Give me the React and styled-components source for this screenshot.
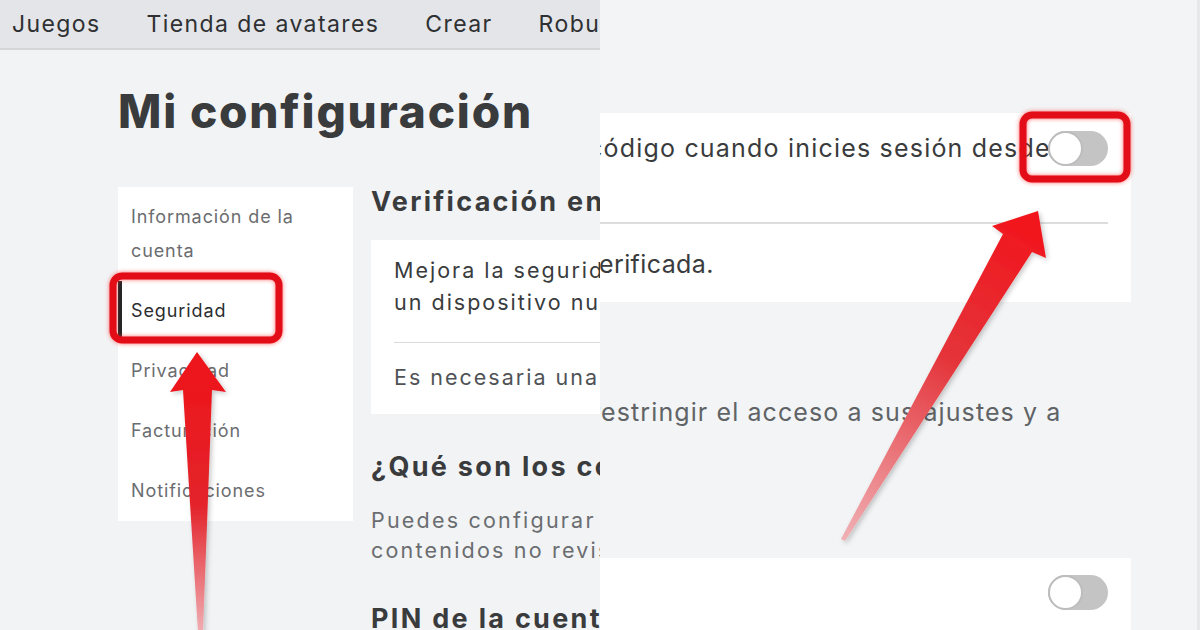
import React from "react";
import styled, { createGlobalStyle } from "styled-components";

const GlobalStyle = createGlobalStyle`
  html, body {
    margin: 0;
    padding: 0;
  }
  body {
    width: 1200px;
    height: 630px;
    overflow: hidden;
    background: #f2f4f5;
    font-family: Inter, "Liberation Sans", sans-serif;
  }
`;

const Frame = styled.div`
  position: relative;
  display: flex;
  width: 1200px;
  height: 630px;
  overflow: hidden;
`;

/* ---------- left half: the settings page ---------- */

const LeftPane = styled.div`
  width: 600px;
  height: 630px;
  flex-shrink: 0;
  overflow: hidden;
  display: flex;
  flex-direction: column;
  background: #f2f3f5;
`;

const TopNav = styled.nav`
  height: 48px;
  flex-shrink: 0;
  display: flex;
  align-items: center;
  gap: 46px;
  padding-left: 12px;
  background: #e3e5e8;
  border-bottom: 2px solid #d4d7da;
  white-space: nowrap;
`;

const NavLink = styled.span`
  font-size: 23px;
  letter-spacing: 1.4px;
  color: #2e3032;
`;

const Content = styled.div`
  padding-left: 118px;
  display: flex;
  flex-direction: column;
`;

const PageTitle = styled.h1`
  margin: 38px 0 0;
  font-size: 46px;
  line-height: 46px;
  font-weight: 800;
  letter-spacing: 1.8px;
  color: #393b3d;
  white-space: nowrap;
`;

const Columns = styled.div`
  display: flex;
  gap: 18px;
  margin-top: 53px;
`;

const SideMenu = styled.ul`
  list-style: none;
  margin: 0;
  padding: 0;
  width: 235px;
  height: 334px;
  flex-shrink: 0;
  background: #ffffff;
`;

const MenuItem = styled.li`
  padding: 13px 8px 13px 13px;
  font-size: 18px;
  line-height: 34px;
  letter-spacing: 0.9px;
  white-space: nowrap;
  color: ${(p) => (p.$active ? "#2b2d2f" : "#6b6d70")};
  box-shadow: ${(p) => (p.$active ? "inset 4px 0 0 #232527" : "none")};
`;

const MainColumn = styled.div`
  width: 900px;
  flex-shrink: 0;
  display: flex;
  flex-direction: column;
  white-space: nowrap;
`;

const SectionTitle = styled.h2`
  margin: ${(p) => p.$top || 0}px 0 0;
  font-size: 27px;
  line-height: 30px;
  font-weight: 700;
  letter-spacing: 2.3px;
  color: #393b3d;
`;

const InfoCard = styled.div`
  margin-top: 23px;
  background: #ffffff;
  padding: 14px 23px 21px;
`;

const CardText = styled.p`
  margin: 0;
  font-size: 21.5px;
  line-height: 32px;
  letter-spacing: 2px;
  color: ${(p) => (p.$muted ? "#505356" : "#393b3d")};
`;

const CardRule = styled.hr`
  border: none;
  height: 1px;
  background: #d9dadb;
  margin: 24px 0 18px;
`;

const Paragraph = styled.p`
  margin: 23px 0 0;
  font-size: 21.5px;
  line-height: 30px;
  letter-spacing: 2.2px;
  color: #6a6d70;
`;

/* ---------- right half: the zoomed-in crop ---------- */

const RightPane = styled.div`
  width: 600px;
  height: 630px;
  flex-shrink: 0;
  overflow: hidden;
  display: flex;
  flex-direction: column;
  padding-top: 113px;
  box-sizing: border-box;
  background: #f2f4f5;
  border-right: 3px solid #e6e8ea;
  white-space: nowrap;
`;

const ZoomCard = styled.div`
  margin-left: -40px;
  width: 571px;
  flex-shrink: 0;
  background: #ffffff;
  padding: ${(p) => (p.$bottom ? "16px 23px 40px 28px" : "0 23px 22px 28px")};
  box-sizing: border-box;
`;

const ZoomRow = styled.div`
  display: flex;
  align-items: center;
  height: ${(p) => p.$h || 70}px;
  overflow: hidden;
`;

const ZoomText = styled.span`
  display: block;
  flex: 1;
  min-width: 0;
  font-size: 25px;
  line-height: 32px;
  letter-spacing: ${(p) => p.$ls ?? 1.2}px;
  color: #393b3d;
  margin-left: ${(p) => p.$shift || 0}px;
`;

const ZoomRule = styled.hr`
  border: none;
  height: 2px;
  background: #dcdddf;
  margin: 39px 0 24px;
`;

const ZoomParagraph = styled.p`
  margin: 94px 0 0 -9px;
  font-size: 25px;
  line-height: 32px;
  letter-spacing: 1.1px;
  color: #606366;
`;

const ToggleTrack = styled.div`
  position: relative;
  width: 60px;
  height: 35px;
  flex-shrink: 0;
  margin-left: auto;
  border-radius: 18px;
  background: #c4c4c4;
`;

const ToggleKnob = styled.div`
  position: absolute;
  left: 0;
  top: 0;
  width: 35px;
  height: 35px;
  box-sizing: border-box;
  border-radius: 50%;
  background: #ffffff;
  border: 2px solid #bdbdbd;
`;

const Toggle = () => (
  <ToggleTrack>
    <ToggleKnob />
  </ToggleTrack>
);

/* ---------- annotation layer ---------- */

const Annotations = styled.svg`
  position: absolute;
  left: 0;
  top: 0;
  width: 1200px;
  height: 630px;
  pointer-events: none;
`;

const Markup = () => (
  <Annotations viewBox="0 0 1200 630">
    <defs>
      <linearGradient id="upArrow" x1="0" y1="352" x2="0" y2="632" gradientUnits="userSpaceOnUse">
        <stop offset="0" stopColor="#ee1419" />
        <stop offset="0.55" stopColor="#e3242b" />
        <stop offset="1" stopColor="#f0aeb3" />
      </linearGradient>
      <linearGradient id="slantArrow" x1="1038" y1="211" x2="843" y2="541" gradientUnits="userSpaceOnUse">
        <stop offset="0" stopColor="#f2131a" />
        <stop offset="0.45" stopColor="#e4343a" />
        <stop offset="1" stopColor="#f0b2b6" />
      </linearGradient>
      <filter id="glow" x="-20%" y="-20%" width="140%" height="140%">
        <feDropShadow dx="0" dy="0" stdDeviation="2" floodColor="#ff2a2a" floodOpacity="0.7" />
      </filter>
      <filter id="shade" x="-30%" y="-10%" width="160%" height="120%">
        <feDropShadow dx="2" dy="2" stdDeviation="2.5" floodColor="#000" floodOpacity="0.22" />
      </filter>
    </defs>

    <rect x="113" y="276" width="166" height="64" rx="9" fill="none" stroke="#e20a16" strokeWidth="7" filter="url(#glow)" />
    <rect x="1023" y="115" width="104" height="64" rx="9" fill="none" stroke="#e20a16" strokeWidth="7" filter="url(#glow)" />

    <polygon
      points="197,352 226,392 212,390 203,632 198,632 183,390 170,392"
      fill="url(#upArrow)"
      filter="url(#shade)"
    />
    <polygon
      points="1038,211 1046,258 1032,252 845,541 841,539 1003,234 992,226"
      fill="url(#slantArrow)"
      filter="url(#shade)"
    />
  </Annotations>
);

const menu = [
  { label: "Información de la\ncuenta" },
  { label: "Seguridad", active: true },
  { label: "Privacidad" },
  { label: "Facturación" },
  { label: "Notificaciones" },
];

export default function App() {
  return (
    <>
      <GlobalStyle />
      <Frame>
        <LeftPane>
          <TopNav>
            <NavLink>Juegos</NavLink>
            <NavLink>Tienda de avatares</NavLink>
            <NavLink>Crear</NavLink>
            <NavLink>Robux</NavLink>
          </TopNav>
          <Content>
            <PageTitle>Mi configuración</PageTitle>
            <Columns>
              <SideMenu>
                {menu.map((m) => (
                  <MenuItem key={m.label} $active={m.active}>
                    {m.label.split("\n").map((line, i) => (
                      <div key={i}>{line}</div>
                    ))}
                  </MenuItem>
                ))}
              </SideMenu>
              <MainColumn>
                <SectionTitle>Verificación en dos pasos</SectionTitle>
                <InfoCard>
                  <CardText>Mejora la seguridad de tu cuenta solicitando un código cuando inicies sesión desde</CardText>
                  <CardText>un dispositivo nuevo.</CardText>
                  <CardRule />
                  <CardText $muted>Es necesaria una dirección de correo electrónico verificada.</CardText>
                </InfoCard>
                <SectionTitle $top={38}>¿Qué son los controles parentales?</SectionTitle>
                <Paragraph>
                  Puedes configurar un PIN para restringir el acceso a sus ajustes y a
                  <br />
                  contenidos no revisados.
                </Paragraph>
                <SectionTitle $top={39}>PIN de la cuenta</SectionTitle>
              </MainColumn>
            </Columns>
          </Content>
        </LeftPane>

        <RightPane>
          <ZoomCard>
            <ZoomRow>
              <ZoomText>código cuando inicies sesión desde</ZoomText>
              <Toggle />
            </ZoomRow>
            <ZoomRule />
            <ZoomText $shift={-3} $ls={0.4}>verificada.</ZoomText>
          </ZoomCard>
          <ZoomParagraph>restringir el acceso a sus ajustes y a</ZoomParagraph>
          <ZoomCard $bottom style={{ marginTop: 130 }}>
            <ZoomRow $h={36}>
              <Toggle />
            </ZoomRow>
          </ZoomCard>
        </RightPane>

        <Markup />
      </Frame>
    </>
  );
}
